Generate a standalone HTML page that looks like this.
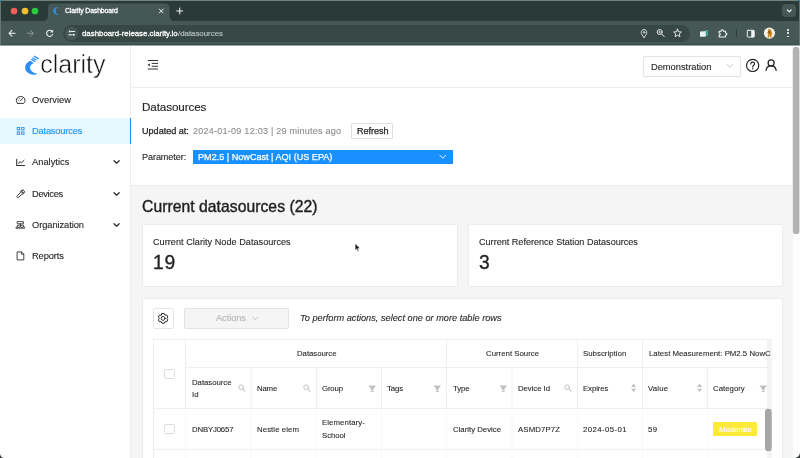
<!DOCTYPE html>
<html>
<head>
<meta charset="utf-8">
<title>Clarity Dashboard</title>
<style>
*{box-sizing:border-box;margin:0;padding:0}
html,body{width:800px;height:458px;overflow:hidden;background:#f5f5f5;font-family:"Liberation Sans",sans-serif;color:#262626}
body{position:relative}
.a{position:absolute;display:block}
.t{position:absolute;white-space:nowrap;will-change:transform;-webkit-text-stroke:0.012em}
svg text{will-change:transform}
svg{overflow:visible}
</style>
</head>
<body>
<div class="a" style="left:0px;top:45px;width:800px;height:413px;background:#f5f5f5;"></div>
<div class="a" style="left:0px;top:45px;width:131px;height:413px;background:#fff;border-right:1px solid #ececec;"></div>
<div class="a" style="left:131px;top:45px;width:661px;height:43px;background:#fff;border-bottom:1px solid #ececec;"></div>
<div class="a" style="left:131px;top:88px;width:661px;height:97.6px;background:#fff;border-bottom:1px solid #ebebeb;"></div>
<div class="a" style="left:792.6px;top:45px;width:7.4px;height:413px;background:#fdfdfd;"></div>
<svg class="a" style="left:790px;top:45px" width="10" height="200" viewBox="790 45 10 200"><rect x="792.9" y="46.8" width="6.5" height="187.3" rx="3.2" fill="#b2b2b2"/></svg>
<div class="a" style="left:0px;top:0px;width:800px;height:21px;background:#2a3a37;"></div>
<div class="a" style="left:0px;top:21px;width:800px;height:24px;background:#455855;"></div>
<div class="a" style="left:0px;top:44px;width:800px;height:1px;background:#384c48;"></div>
<div class="a" style="left:0px;top:45px;width:800px;height:1px;background:#9aa6a3;"></div>
<svg class="a" style="left:42px;top:3px" width="140" height="18" viewBox="0 0 140 18"><path d="M0 18 C4 18 6 16 6 12 V5 C6 2 8 0.6 11 0.6 H122.5 C125.5 0.6 127.5 2 127.5 5 V12 C127.5 16 129.5 18 133.5 18 Z" fill="#455855"/></svg>
<div class="a" style="left:63px;top:24.5px;width:627px;height:17.5px;background:#364744;border-radius:9px;"></div>
<div class="a" style="left:65.2px;top:27px;width:12.6px;height:12.6px;background:#455855;border-radius:50%;"></div>
<svg class="a" style="left:10.4px;top:7.2px" width="8" height="8" viewBox="0 0 8 8"><circle cx="4" cy="4" r="3.35" fill="#ee5f57"/></svg>
<svg class="a" style="left:21px;top:7.2px" width="8" height="8" viewBox="0 0 8 8"><circle cx="4" cy="4" r="3.35" fill="#f6bd2e"/></svg>
<svg class="a" style="left:31.299999999999997px;top:7.2px" width="8" height="8" viewBox="0 0 8 8"><circle cx="4" cy="4" r="3.35" fill="#2bc840"/></svg>
<div class="a" style="left:782px;top:3.7px;width:14.3px;height:13.8px;background:#455855;border-radius:4px;"></div>
<div class="t" style="left:65.00px;top:5px;font-size:6.9px;line-height:11px;height:11px;color:#fff;letter-spacing:-0.139px;-webkit-text-stroke:0.28px;">Clarity Dashboard</div>
<div class="t" style="left:82.20px;top:27px;font-size:7.9px;line-height:13px;height:13px;color:#fff;letter-spacing:-0.024px;-webkit-text-stroke:0.28px;">dashboard-release.clarity.io</div>
<div class="t" style="left:178.00px;top:27px;font-size:7.9px;line-height:13px;height:13px;color:#b4bfbc;letter-spacing:-0.021px;-webkit-text-stroke:0.2px;">/datasources</div>
<svg class="a" style="left:38px;top:50px" width="72" height="34" viewBox="38 50 72 34"><text x="40.2" y="73" font-family="Liberation Sans" font-size="25.6" textLength="65.4" lengthAdjust="spacingAndGlyphs" fill="#151515" stroke="#fff" stroke-width="0.5">clarity</text></svg>
<div class="a" style="left:0px;top:118px;width:131px;height:26px;background:#e6f7ff;border-right:1.5px solid #1890ff;"></div>
<div class="t" style="left:31.80px;top:93px;font-size:9.3px;line-height:14px;height:14px;color:#262626;letter-spacing:0.035px;">Overview</div>
<div class="t" style="left:32.00px;top:124px;font-size:9.3px;line-height:14px;height:14px;color:#1890ff;letter-spacing:-0.191px;">Datasources</div>
<div class="t" style="left:32.00px;top:155px;font-size:9.3px;line-height:14px;height:14px;color:#262626;letter-spacing:0.023px;">Analytics</div>
<div class="t" style="left:32.00px;top:187px;font-size:9.3px;line-height:14px;height:14px;color:#262626;letter-spacing:-0.313px;">Devices</div>
<div class="t" style="left:31.80px;top:218px;font-size:9.3px;line-height:14px;height:14px;color:#262626;letter-spacing:-0.071px;">Organization</div>
<div class="t" style="left:32.00px;top:249px;font-size:9.3px;line-height:14px;height:14px;color:#262626;letter-spacing:-0.094px;">Reports</div>
<div class="a" style="left:643.4px;top:56px;width:97.2px;height:20.5px;background:#fff;border:1px solid #e4e4e4;border-radius:1px;"></div>
<div class="t" style="left:650.90px;top:60px;font-size:9.3px;line-height:14px;height:14px;color:#262626;letter-spacing:-0.006px;">Demonstration</div>
<div class="t" style="left:142.30px;top:98px;font-size:11.7px;line-height:17px;height:17px;color:#262626;letter-spacing:-0.118px;">Datasources</div>
<div class="t" style="left:142.30px;top:124px;font-size:9.1px;line-height:14px;height:14px;color:#1f1f1f;letter-spacing:-0.015px;-webkit-text-stroke:0.25px;">Updated at:</div>
<div class="t" style="left:192.50px;top:124px;font-size:9.1px;line-height:14px;height:14px;color:#8c8c8c;letter-spacing:0.211px;">2024-01-09 12:03 | 29 minutes ago</div>
<div class="a" style="left:351.3px;top:123px;width:41.8px;height:15.5px;background:#fff;border:1px solid #dedede;border-radius:1px;"></div>
<div class="t" style="left:356.50px;top:124px;font-size:9.1px;line-height:14px;height:14px;color:#1f1f1f;letter-spacing:-0.061px;-webkit-text-stroke:0.25px;">Refresh</div>
<div class="t" style="left:142.30px;top:150px;font-size:9.1px;line-height:14px;height:14px;color:#262626;letter-spacing:-0.090px;">Parameter:</div>
<div class="a" style="left:192.5px;top:149.5px;width:260.5px;height:14.5px;background:#1890ff;"></div>
<div class="t" style="left:197.50px;top:150px;font-size:9.1px;line-height:14px;height:14px;color:#fff;letter-spacing:-0.001px;-webkit-text-stroke:0.25px;">PM2.5 | NowCast | AQI (US EPA)</div>
<div class="t" style="left:142.40px;top:196px;font-size:15.7px;line-height:21px;height:21px;color:#1f1f1f;letter-spacing:0.047px;-webkit-text-stroke:0.4px;">Current datasources (22)</div>
<div class="a" style="left:142px;top:224px;width:315.5px;height:63px;background:#fff;border:1px solid #ececec;border-radius:2px;"></div>
<div class="a" style="left:467.5px;top:224px;width:315.5px;height:63px;background:#fff;border:1px solid #ececec;border-radius:2px;"></div>
<div class="t" style="left:152.80px;top:235px;font-size:9.1px;line-height:14px;height:14px;color:#262626;letter-spacing:0.037px;">Current Clarity Node Datasources</div>
<div class="t" style="left:153.40px;top:250px;font-size:19.3px;line-height:25px;height:25px;color:#1f1f1f;letter-spacing:0.732px;-webkit-text-stroke:0.3px;">19</div>
<div class="t" style="left:478.50px;top:235px;font-size:9.1px;line-height:14px;height:14px;color:#262626;letter-spacing:-0.009px;">Current Reference Station Datasources</div>
<div class="t" style="left:479.00px;top:250px;font-size:19.3px;line-height:25px;height:25px;color:#1f1f1f;-webkit-text-stroke:0.3px;">3</div>
<div class="a" style="left:142px;top:297.5px;width:641px;height:170px;background:#fff;border:1px solid #ececec;border-radius:2px;"></div>
<div class="a" style="left:153px;top:308px;width:21px;height:20.5px;background:#fff;border:1px solid #e6e6e6;border-radius:1.5px;"></div>
<div class="a" style="left:184.3px;top:308px;width:104.5px;height:20.5px;background:#f5f5f5;border:1px solid #e3e3e3;border-radius:1.5px;"></div>
<div class="t" style="left:215.60px;top:311px;font-size:9.3px;line-height:14px;height:14px;color:#b5b5b5;letter-spacing:-0.083px;">Actions</div>
<div class="t" style="left:300.10px;top:311px;font-size:9.2px;line-height:14px;height:14px;color:#262626;letter-spacing:0.005px;font-style:italic;">To perform actions, select one or more table rows</div>
<svg class="a" style="left:0;top:0" width="800" height="458" viewBox="0 0 800 458"><rect x="153" y="339" width="618.5" height="1" fill="#efefef"/><rect x="153" y="339" width="1" height="130" fill="#efefef"/><rect x="185" y="367" width="586.5" height="1" fill="#efefef"/><rect x="153" y="408" width="618.5" height="1" fill="#efefef"/><rect x="153" y="448.8" width="618.5" height="1" fill="#efefef"/><rect x="185" y="408" width="1" height="60" fill="#f8f8f8"/><rect x="250.5" y="408" width="1" height="60" fill="#f8f8f8"/><rect x="316" y="408" width="1" height="60" fill="#f8f8f8"/><rect x="381" y="408" width="1" height="60" fill="#f8f8f8"/><rect x="446" y="408" width="1" height="60" fill="#f8f8f8"/><rect x="511.5" y="408" width="1" height="60" fill="#f8f8f8"/><rect x="577" y="408" width="1" height="60" fill="#f8f8f8"/><rect x="642" y="408" width="1" height="60" fill="#f8f8f8"/><rect x="707" y="408" width="1" height="60" fill="#f8f8f8"/><rect x="185" y="340" width="1" height="68" fill="#efefef"/><rect x="446" y="340" width="1" height="68" fill="#efefef"/><rect x="577" y="340" width="1" height="68" fill="#efefef"/><rect x="642" y="340" width="1" height="68" fill="#efefef"/><rect x="250.5" y="368" width="1" height="40" fill="#efefef"/><rect x="316" y="368" width="1" height="40" fill="#efefef"/><rect x="381" y="368" width="1" height="40" fill="#efefef"/><rect x="511.5" y="368" width="1" height="40" fill="#efefef"/><rect x="707" y="368" width="1" height="40" fill="#efefef"/></svg>
<div class="a" style="left:766.5px;top:340px;width:5.5px;height:118px;background:#f3f3f3;"></div>
<svg class="a" style="left:760px;top:405px" width="14" height="50" viewBox="760 405 14 50"><rect x="765" y="408.8" width="6.7" height="42.4" rx="3.3" fill="#a6a6a6"/></svg>
<div class="a" style="left:164.3px;top:368.8px;width:10.6px;height:10.6px;background:#fff;border:1px solid #dcdcdc;border-radius:1.5px;"></div>
<div class="a" style="left:164.3px;top:423.8px;width:10.6px;height:10.6px;background:#fff;border:1px solid #dcdcdc;border-radius:1.5px;"></div>
<div class="t" style="left:296.50px;top:347px;font-size:7.8px;line-height:13px;height:13px;color:#262626;letter-spacing:-0.043px;">Datasource</div>
<div class="t" style="left:485.50px;top:347px;font-size:7.8px;line-height:13px;height:13px;color:#262626;letter-spacing:0.008px;">Current Source</div>
<div class="t" style="left:583.00px;top:347px;font-size:7.8px;line-height:13px;height:13px;color:#262626;letter-spacing:0.030px;">Subscription</div>
<div class="a" style="left:643.5px;top:341px;width:128px;height:26px;overflow:hidden">
<div class="t" style="left:5.50px;top:6px;font-size:7.8px;line-height:13px;height:13px;color:#262626;letter-spacing:0.011px;">Latest Measurement: PM2.5 NowC</div>
</div>
<div class="t" style="left:191.50px;top:376px;font-size:7.8px;line-height:13px;height:13px;color:#262626;letter-spacing:-0.043px;">Datasource</div>
<div class="t" style="left:191.50px;top:388px;font-size:7.8px;line-height:13px;height:13px;color:#262626;">Id</div>
<div class="t" style="left:256.75px;top:382px;font-size:7.8px;line-height:13px;height:13px;color:#262626;letter-spacing:-0.185px;">Name</div>
<div class="t" style="left:322.00px;top:382px;font-size:7.8px;line-height:13px;height:13px;color:#262626;letter-spacing:-0.170px;">Group</div>
<div class="t" style="left:387.00px;top:382px;font-size:7.8px;line-height:13px;height:13px;color:#262626;letter-spacing:-0.075px;">Tags</div>
<div class="t" style="left:452.50px;top:382px;font-size:7.8px;line-height:13px;height:13px;color:#262626;letter-spacing:-0.137px;">Type</div>
<div class="t" style="left:517.50px;top:382px;font-size:7.8px;line-height:13px;height:13px;color:#262626;letter-spacing:-0.064px;">Device Id</div>
<div class="t" style="left:583.00px;top:382px;font-size:7.8px;line-height:13px;height:13px;color:#262626;letter-spacing:-0.085px;">Expires</div>
<div class="t" style="left:648.00px;top:382px;font-size:7.8px;line-height:13px;height:13px;color:#262626;letter-spacing:0.157px;">Value</div>
<div class="t" style="left:713.25px;top:382px;font-size:7.8px;line-height:13px;height:13px;color:#262626;letter-spacing:0.014px;">Category</div>
<div class="t" style="left:191.50px;top:423px;font-size:7.8px;line-height:13px;height:13px;color:#262626;letter-spacing:-0.178px;">DNBYJ0657</div>
<div class="t" style="left:256.75px;top:423px;font-size:7.8px;line-height:13px;height:13px;color:#262626;letter-spacing:0.082px;">Nestle elem</div>
<div class="t" style="left:321.90px;top:416px;font-size:7.8px;line-height:13px;height:13px;color:#262626;letter-spacing:0.075px;">Elementary-</div>
<div class="t" style="left:322.00px;top:429px;font-size:7.8px;line-height:13px;height:13px;color:#262626;letter-spacing:-0.070px;">School</div>
<div class="t" style="left:452.50px;top:423px;font-size:7.8px;line-height:13px;height:13px;color:#262626;letter-spacing:-0.008px;">Clarity Device</div>
<div class="t" style="left:517.50px;top:423px;font-size:7.8px;line-height:13px;height:13px;color:#262626;letter-spacing:0.117px;">ASMD7P7Z</div>
<div class="t" style="left:583.00px;top:423px;font-size:7.8px;line-height:13px;height:13px;color:#262626;letter-spacing:0.400px;">2024-05-01</div>
<div class="t" style="left:648.00px;top:423px;font-size:7.8px;line-height:13px;height:13px;color:#262626;letter-spacing:0.324px;">59</div>
<div class="a" style="left:713.3px;top:422px;width:43.7px;height:14px;background:#fde93a;border-radius:1.5px;"></div>
<div class="t" style="left:719.00px;top:423px;font-size:7.8px;line-height:13px;height:13px;color:#fff;letter-spacing:-0.029px;">Moderate</div>
<svg class="a" style="left:24px;top:54px;" width="16" height="22" viewBox="24 54 16 22"><path d="M30.4 60.8 C27.2 62.2 25.1 64.7 25.1 67.5 C25.1 71.8 29.6 74.9 34.4 74.7 C35.8 74.6 36.8 74.1 37.1 73.4 C33.2 73.4 30.1 70.6 30.1 67.5 C30.1 65.5 31.6 63.9 34 63 Z" fill="#2c8df2"/><path d="M34 56.1 L38.6 58.9 M32.3 57.7 L36.4 60.2 M31.2 59.2 L35.2 61.6" stroke="#2c8df2" stroke-width="1.3" fill="none"/></svg>
<svg class="a" style="left:147px;top:59px;" width="13" height="12" viewBox="147 59 13 12"><path d="M147.8 60.5 H158 M151.7 63.4 H158 M151.7 66.25 H158 M147.8 69 H158" stroke="#262626" stroke-width="0.95" fill="none"/><path d="M147.7 64.85 L149.8 63.3 V66.4 Z" fill="#262626"/></svg>
<svg class="a" style="left:15px;top:95px;" width="12" height="10" viewBox="15 95 12 10"><path d="M17.7 103.4 H23.6 C24.6 102.5 25 101.4 25 100.5 C25 98.2 23.1 96.5 20.65 96.5 C18.2 96.5 16.3 98.2 16.3 100.5 C16.3 101.4 16.7 102.5 17.7 103.4 Z" fill="none" stroke="#303030" stroke-width="1.0" stroke-linecap="round" stroke-linejoin="round"/><path d="M20.3 100.9 L22.5 98.5" fill="none" stroke="#303030" stroke-width="1.0" stroke-linecap="round" stroke-linejoin="round"/><path d="M18 99.9 l0.5 0.2 M19.2 98.2 l0.3 0.5" fill="none" stroke="#303030" stroke-width="0.7" stroke-linecap="round" stroke-linejoin="round"/></svg>
<svg class="a" style="left:16px;top:126px;" width="10" height="10" viewBox="16 126 10 10"><rect x="17.25" y="127.55" width="2.4" height="2.4" fill="none" stroke="#1890ff" stroke-width="0.9"/><rect x="21.65" y="127.55" width="2.4" height="2.4" fill="none" stroke="#1890ff" stroke-width="0.9"/><rect x="17.25" y="131.95" width="2.4" height="2.4" fill="none" stroke="#1890ff" stroke-width="0.9"/><rect x="21.65" y="131.95" width="2.4" height="2.4" fill="none" stroke="#1890ff" stroke-width="0.9"/></svg>
<svg class="a" style="left:15px;top:158px;" width="12" height="10" viewBox="15 158 12 10"><path d="M16.7 159.2 V165.4 H24.5" fill="none" stroke="#303030" stroke-width="1.05" stroke-linecap="round" stroke-linejoin="round"/><path d="M18.3 163.3 L20 161.6 L21.4 162.8 L24 160.3" fill="none" stroke="#303030" stroke-width="1.0" stroke-linecap="round" stroke-linejoin="round"/></svg>
<svg class="a" style="left:15px;top:188px;" width="12" height="11" viewBox="15 188 12 11"><path d="M23.2 190 C21.6 189.7 20.2 191 20.4 192.6 L17.2 195.8 C16.7 196.3 16.7 196.9 17.2 197.3 C17.6 197.8 18.2 197.8 18.7 197.3 L21.9 194.1 C23.5 194.3 24.8 192.9 24.5 191.3 L23.1 192.7 L21.8 192.7 L21.8 191.4 Z" fill="none" stroke="#303030" stroke-width="0.95" stroke-linecap="round" stroke-linejoin="round"/></svg>
<svg class="a" style="left:15px;top:220px;" width="12" height="10" viewBox="15 220 12 10"><rect x="17.6" y="221.6" width="5.8" height="2.2" fill="none" stroke="#303030" stroke-width="0.85" stroke-linecap="round" stroke-linejoin="round"/><path d="M20.5 223.8 V225.2 M17.4 226.6 V225.2 H23.6 V226.6 M20.5 225.2 V226.6" fill="none" stroke="#303030" stroke-width="0.85" stroke-linecap="round" stroke-linejoin="round"/><path d="M16.4 227 H18.4 V228.3 H16.4 Z M19.5 227 H21.5 V228.3 H19.5 Z M22.6 227 H24.6 V228.3 H22.6 Z" fill="none" stroke="#303030" stroke-width="0.8" stroke-linecap="round" stroke-linejoin="round"/></svg>
<svg class="a" style="left:16px;top:250px;" width="10" height="12" viewBox="16 250 10 12"><path d="M17.5 251.9 H21.6 L23.8 254.1 V259.9 H17.5 Z" fill="none" stroke="#303030" stroke-width="0.9" stroke-linecap="round" stroke-linejoin="round"/><path d="M21.4 252 V254.3 H23.7" fill="none" stroke="#303030" stroke-width="0.8" stroke-linecap="round" stroke-linejoin="round"/></svg>
<svg class="a" style="left:113.2px;top:159.2px;" width="8" height="6" viewBox="0 0 8 6"><path d="M1.0 1.7 L3.6 4.2 L6.2 1.7" fill="none" stroke="#262626" stroke-width="1.2" stroke-linecap="round" stroke-linejoin="round"/></svg>
<svg class="a" style="left:113.2px;top:190.5px;" width="8" height="6" viewBox="0 0 8 6"><path d="M1.0 1.7 L3.6 4.2 L6.2 1.7" fill="none" stroke="#262626" stroke-width="1.2" stroke-linecap="round" stroke-linejoin="round"/></svg>
<svg class="a" style="left:113.2px;top:221.8px;" width="8" height="6" viewBox="0 0 8 6"><path d="M1.0 1.7 L3.6 4.2 L6.2 1.7" fill="none" stroke="#262626" stroke-width="1.2" stroke-linecap="round" stroke-linejoin="round"/></svg>
<svg class="a" style="left:726px;top:63px;" width="8" height="6" viewBox="0 0 8 6"><path d="M0.9 1.3 L3.9 4.4 L6.9 1.3" fill="none" stroke="#bdbdbd" stroke-width="0.8" stroke-linecap="round" stroke-linejoin="round"/></svg>
<svg class="a" style="left:745px;top:58px;" width="16" height="15" viewBox="745 58 16 15"><circle cx="752.65" cy="65.45" r="6.1" fill="none" stroke="#1f1f1f" stroke-width="1.15" stroke-linecap="round" stroke-linejoin="round"/><path d="M750.8 64 C750.8 62.8 751.6 62.1 752.7 62.1 C753.8 62.1 754.6 62.8 754.6 63.8 C754.6 65.2 752.7 65.3 752.7 66.9" fill="none" stroke="#1f1f1f" stroke-width="1.1" stroke-linecap="round" stroke-linejoin="round"/><circle cx="752.7" cy="68.7" r="0.7" fill="#1f1f1f"/></svg>
<svg class="a" style="left:764px;top:58px;" width="14" height="14" viewBox="764 58 14 14"><circle cx="771.1" cy="62.9" r="3.0" fill="none" stroke="#1f1f1f" stroke-width="1.25" stroke-linecap="round" stroke-linejoin="round"/><path d="M766.1 70.3 C766.4 67.6 768.5 65.9 771.1 65.9 C773.7 65.9 775.8 67.6 776.1 70.3" fill="none" stroke="#1f1f1f" stroke-width="1.25" stroke-linecap="round" stroke-linejoin="round"/></svg>
<svg class="a" style="left:438.5px;top:153.8px;" width="8" height="6" viewBox="0 0 8 6"><path d="M0.8 1.2 L3.75 4.3 L6.7 1.2" fill="none" stroke="#fff" stroke-width="0.9" stroke-linecap="round" stroke-linejoin="round"/></svg>
<svg class="a" style="left:251.5px;top:315.5px;" width="7" height="6" viewBox="0 0 7 6"><path d="M0.8 1.2 L3.3 3.8 L5.8 1.2" fill="none" stroke="#b5b5b5" stroke-width="0.8" stroke-linecap="round" stroke-linejoin="round"/></svg>
<svg class="a" style="left:157px;top:312px;" width="13" height="13" viewBox="157 312 13 13"><path d="M161.99 313.58 L164.21 313.58 L164.97 315.15 L166.72 315.02 L167.83 316.95 L166.85 318.40 L167.83 319.85 L166.72 321.78 L164.97 321.65 L164.21 323.22 L161.99 323.22 L161.22 321.65 L159.48 321.78 L158.37 319.85 L159.35 318.40 L158.37 316.95 L159.48 315.02 L161.22 315.15 Z" fill="none" stroke="#262626" stroke-width="1.0" stroke-linecap="round" stroke-linejoin="round"/><circle cx="163.1" cy="318.4" r="1.95" fill="none" stroke="#262626" stroke-width="0.95" stroke-linecap="round" stroke-linejoin="round"/></svg>
<svg class="a" style="left:238px;top:384.4px;" width="8" height="8" viewBox="0 0 8 8"><circle cx="3.1" cy="3.2" r="2.35" fill="none" stroke="#bfbfbf" stroke-width="0.95" stroke-linecap="round" stroke-linejoin="round"/><path d="M4.9 5.0 L6.9 7.1" fill="none" stroke="#bfbfbf" stroke-width="1.05" stroke-linecap="round" stroke-linejoin="round"/></svg>
<svg class="a" style="left:303.3px;top:384.4px;" width="8" height="8" viewBox="0 0 8 8"><circle cx="3.1" cy="3.2" r="2.35" fill="none" stroke="#bfbfbf" stroke-width="0.95" stroke-linecap="round" stroke-linejoin="round"/><path d="M4.9 5.0 L6.9 7.1" fill="none" stroke="#bfbfbf" stroke-width="1.05" stroke-linecap="round" stroke-linejoin="round"/></svg>
<svg class="a" style="left:564px;top:384.4px;" width="8" height="8" viewBox="0 0 8 8"><circle cx="3.1" cy="3.2" r="2.35" fill="none" stroke="#bfbfbf" stroke-width="0.95" stroke-linecap="round" stroke-linejoin="round"/><path d="M4.9 5.0 L6.9 7.1" fill="none" stroke="#bfbfbf" stroke-width="1.05" stroke-linecap="round" stroke-linejoin="round"/></svg>
<svg class="a" style="left:369px;top:384.6px;" width="8" height="8" viewBox="0 0 8 8"><path d="M-0.5 0.6 H7.0 L4.5 3.7 V5.3 H2.0 V3.7 Z" fill="#bfbfbf"/><rect x="1.6" y="5.9" width="3.3" height="1.0" fill="#bfbfbf"/></svg>
<svg class="a" style="left:434px;top:384.6px;" width="8" height="8" viewBox="0 0 8 8"><path d="M-0.5 0.6 H7.0 L4.5 3.7 V5.3 H2.0 V3.7 Z" fill="#bfbfbf"/><rect x="1.6" y="5.9" width="3.3" height="1.0" fill="#bfbfbf"/></svg>
<svg class="a" style="left:499.5px;top:384.6px;" width="8" height="8" viewBox="0 0 8 8"><path d="M-0.5 0.6 H7.0 L4.5 3.7 V5.3 H2.0 V3.7 Z" fill="#bfbfbf"/><rect x="1.6" y="5.9" width="3.3" height="1.0" fill="#bfbfbf"/></svg>
<svg class="a" style="left:760px;top:384.6px;" width="8" height="8" viewBox="0 0 8 8"><path d="M-0.5 0.6 H7.0 L4.5 3.7 V5.3 H2.0 V3.7 Z" fill="#bfbfbf"/><rect x="1.6" y="5.9" width="3.3" height="1.0" fill="#bfbfbf"/></svg>
<svg class="a" style="left:631px;top:383.3px;" width="6" height="10" viewBox="0 0 6 10"><path d="M0.1 4.1 L2.6 0.8 L5.1 4.1 Z M0.1 5.8 L2.6 9.1 L5.1 5.8 Z" fill="#bfbfbf"/></svg>
<svg class="a" style="left:696.5px;top:383.3px;" width="6" height="10" viewBox="0 0 6 10"><path d="M0.1 4.1 L2.6 0.8 L5.1 4.1 Z M0.1 5.8 L2.6 9.1 L5.1 5.8 Z" fill="#bfbfbf"/></svg>
<svg class="a" style="left:52px;top:6px;" width="8" height="10" viewBox="52 6 8 10"><path d="M57.6 6.9 C54.6 7.4 53.2 9.2 53.2 11 C53.2 13.1 55.2 14.9 58.6 15 C56.4 14 55.6 12.6 55.6 11.1 C55.6 9.5 56.4 8 57.9 7.5 Z" fill="#2b8ff0"/></svg>
<svg class="a" style="left:158px;top:8px;" width="6" height="6" viewBox="158 8 6 6"><path d="M159.3 9.1 L163.2 13 M163.2 9.1 L159.3 13" fill="none" stroke="#f2f5f4" stroke-width="0.95" stroke-linecap="round" stroke-linejoin="round"/></svg>
<svg class="a" style="left:176px;top:7px;" width="8" height="8" viewBox="176 7 8 8"><path d="M179.75 8 V14 M176.75 11 H182.75" fill="none" stroke="#f2f5f4" stroke-width="1.0" stroke-linecap="round" stroke-linejoin="round"/></svg>
<svg class="a" style="left:786px;top:8px;" width="7" height="6" viewBox="786 8 7 6"><path d="M787.3 9.9 L789.3 11.8 L791.3 9.9" fill="none" stroke="#f2f5f4" stroke-width="1.25" stroke-linecap="round" stroke-linejoin="round"/></svg>
<svg class="a" style="left:8px;top:29px;" width="9" height="9" viewBox="8 29 9 9"><path d="M15.1 33.25 H9.2 M11.9 30.4 L9 33.25 L11.9 36.1" fill="none" stroke="#f2f5f4" stroke-width="1.05" stroke-linecap="round" stroke-linejoin="round"/></svg>
<svg class="a" style="left:26px;top:29px;" width="9" height="9" viewBox="26 29 9 9"><path d="M27.2 33.25 H33.2 M30.5 30.4 L33.4 33.25 L30.5 36.1" fill="none" stroke="#8a9793" stroke-width="1.0" stroke-linecap="round" stroke-linejoin="round"/></svg>
<svg class="a" style="left:45px;top:29px;" width="10" height="9" viewBox="45 29 10 9"><path d="M52.3 31.6 A3.1 3.1 0 1 0 52.6 34.4" fill="none" stroke="#f2f5f4" stroke-width="1.05" stroke-linecap="round" stroke-linejoin="round"/><path d="M52.9 29.9 V32.2 H50.6 Z" fill="#f2f5f4" stroke="#f2f5f4" stroke-width="0.4" stroke-linejoin="round"/></svg>
<svg class="a" style="left:67px;top:29px;" width="9" height="9" viewBox="67 29 9 9"><path d="M71.2 31.5 H74.7 M68.8 34.8 H72.3" fill="none" stroke="#f2f5f4" stroke-width="1.0" stroke-linecap="round" stroke-linejoin="round"/><circle cx="69.7" cy="31.5" r="0.95" fill="#f2f5f4"/><circle cx="73.8" cy="34.8" r="0.95" fill="#f2f5f4"/></svg>
<svg class="a" style="left:640px;top:28px;" width="8" height="10" viewBox="640 28 8 10"><path d="M644 37.4 C642.2 35.3 641.2 33.9 641.2 32.4 C641.2 30.8 642.4 29.6 644 29.6 C645.6 29.6 646.8 30.8 646.8 32.4 C646.8 33.9 645.8 35.3 644 37.4 Z" fill="none" stroke="#f2f5f4" stroke-width="0.85" stroke-linecap="round" stroke-linejoin="round"/><circle cx="644" cy="32.4" r="0.9" fill="none" stroke="#f2f5f4" stroke-width="0.7" stroke-linecap="round" stroke-linejoin="round"/></svg>
<svg class="a" style="left:656px;top:28px;" width="9" height="9" viewBox="656 28 9 9"><circle cx="659.7" cy="32" r="2.5" fill="none" stroke="#f2f5f4" stroke-width="0.9" stroke-linecap="round" stroke-linejoin="round"/><path d="M661.6 33.9 L664.2 36.6" fill="none" stroke="#f2f5f4" stroke-width="1.0" stroke-linecap="round" stroke-linejoin="round"/><path d="M658.6 32 H660.8 M659.7 30.9 V33.1" fill="none" stroke="#f2f5f4" stroke-width="0.6" stroke-linecap="round" stroke-linejoin="round"/></svg>
<svg class="a" style="left:673px;top:28px;" width="9" height="9" viewBox="673 28 9 9"><path d="M677.50 29.20 L678.62 31.76 L681.40 32.03 L679.31 33.89 L679.91 36.62 L677.50 35.20 L675.09 36.62 L675.69 33.89 L673.60 32.03 L676.38 31.76 Z" fill="none" stroke="#f2f5f4" stroke-width="0.9" stroke-linecap="round" stroke-linejoin="round"/></svg>
<svg class="a" style="left:699px;top:29px;" width="10" height="9" viewBox="699 29 10 9"><path d="M700 31.6 L704.6 31.2 L707.4 29.9 V35.6 L704.6 36.8 L700 36.8 Z" fill="#e9f1ef"/><path d="M705.6 31 L707.5 30 V35.7 L705.9 36.5 Z" fill="#2aa198"/></svg>
<svg class="a" style="left:717px;top:28px;" width="11" height="10" viewBox="717 28 11 10"><path d="M719.1 31.2 H721.2 C720.8 29.3 723.8 29.3 723.4 31.2 H725.5 V33 C727.4 32.6 727.4 35.6 725.5 35.2 V37 H719.1 V35.1 C720.7 35.3 720.7 32.9 719.1 33.1 Z" fill="none" stroke="#f2f5f4" stroke-width="1.05" stroke-linecap="round" stroke-linejoin="round"/></svg>
<div class="a" style="left:736.2px;top:29.4px;width:0.8px;height:7.6px;background:#2e3f3b;"></div>
<svg class="a" style="left:746px;top:28.5px;" width="10" height="9.5" viewBox="746 28.5 10 9.5"><rect x="747.3" y="29.8" width="6.9" height="6.8" rx="0.8" fill="none" stroke="#f2f5f4" stroke-width="0.95" stroke-linecap="round" stroke-linejoin="round"/><rect x="751.2" y="29.8" width="3" height="6.8" fill="#f2f5f4"/></svg>
<svg class="a" style="left:763px;top:27px;" width="13" height="13" viewBox="763 27 13 13"><circle cx="769.4" cy="33.1" r="5.6" fill="#f6f3ee"/><path d="M768.2 29.4 L769.3 28.6 L770.4 30 L771.2 29.2 L771.4 31.4 L772.6 33.6 L771.4 35 L771.6 37.4 L770.2 37.6 L769.6 35.6 L768.8 37.8 L767.4 37.4 L768.2 34.4 L767.2 32.6 L768.4 31.4 Z" fill="#c8851c"/><path d="M768.9 30.2 L770 31.8 L769.2 34 L768.4 32 Z" fill="#5a3a12"/></svg>
<div class="a" style="left:787.3px;top:29.25px;width:1.5px;height:1.5px;background:#f2f5f4;border-radius:50%;"></div>
<div class="a" style="left:787.3px;top:32.4px;width:1.5px;height:1.5px;background:#f2f5f4;border-radius:50%;"></div>
<div class="a" style="left:787.3px;top:35.55px;width:1.5px;height:1.5px;background:#f2f5f4;border-radius:50%;"></div>
<div class="a" style="left:0px;top:0px;width:800px;height:1px;background:#71817d;"></div>
<div class="a" style="left:0px;top:1px;width:1px;height:44px;background:#667773;"></div>
<div class="a" style="left:799px;top:1px;width:1px;height:44px;background:#667773;"></div>
<svg class="a" style="left:0px;top:0px;" width="4" height="4" viewBox="0 0 4 4"><path d="M0 0 H4 C1.6 0 0 1.6 0 4 Z" fill="#3a86a0"/></svg>
<svg class="a" style="left:796px;top:0px;" width="4" height="4" viewBox="0 0 4 4"><path d="M4 0 H0 C2.4 0 4 1.6 4 4 Z" fill="#2f7f96"/></svg>
<svg class="a" style="left:794px;top:452px;" width="6" height="6" viewBox="0 0 6 6"><path d="M6 0 V6 H0 C3.6 6 6 3.6 6 0 Z" fill="#3a3f3e"/></svg>
<svg class="a" style="left:0px;top:453px;" width="5" height="5" viewBox="0 0 5 5"><path d="M0 0 V5 H5 C2 5 0 3 0 0 Z" fill="#3a3f3e"/></svg>
<svg class="a" style="left:353px;top:242px;" width="9" height="12" viewBox="353 242 9 12"><g transform="translate(355.2 243.6) scale(0.78) translate(-354.6 -243)"><path d="M354.6 243 V251.6 L356.6 249.8 L358 253 L359.3 252.4 L357.9 249.3 L360.6 249.1 Z" fill="#111" stroke="#fff" stroke-width="0.6" stroke-linejoin="round"/></g></svg>
</body>
</html>
